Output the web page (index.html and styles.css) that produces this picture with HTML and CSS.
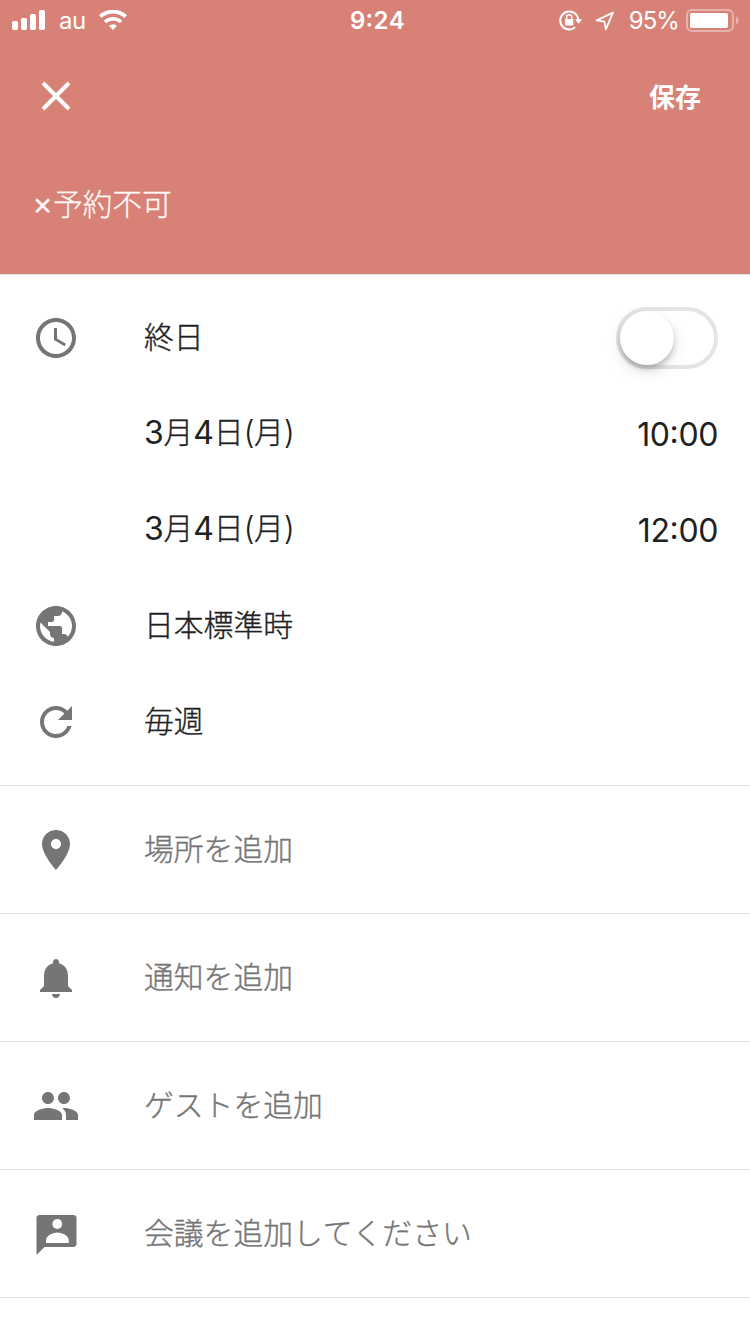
FILE: index.html
```html
<!DOCTYPE html>
<html lang="ja">
<head>
    <meta charset="UTF-8">
    <meta name="viewport" content="width=device-width, initial-scale=1.0">
    <title>予定の編集</title>
    <link rel="stylesheet" href="styles.css">
</head>
<body>
    <header class="header">
        <div class="status-bar">
            <div class="status-left">
                <svg class="signal" width="34" height="20" viewBox="0 0 34 20" fill="#fff">
                    <rect x="0" y="11" width="6" height="9" rx="1.7"/>
                    <rect x="9" y="8" width="6" height="12" rx="1.7"/>
                    <rect x="18" y="4" width="6" height="16" rx="1.7"/>
                    <rect x="27" y="0" width="6" height="20" rx="1.7"/>
                </svg>
                <span class="carrier">au</span>
                <svg class="wifi" width="28" height="20" viewBox="0 0 28 20">
                    <path d="M1.3 6.7a18.3 18.3 0 0 1 25.4 0" fill="none" stroke="#fff" stroke-width="3.8"/>
                    <path d="M6 12a11.6 11.6 0 0 1 16 0" fill="none" stroke="#fff" stroke-width="3.6"/>
                    <path d="M9.9 15.8a6 6 0 0 1 8.2 0L14 20z" fill="#fff"/>
                </svg>
            </div>
            <div class="clock">9:24</div>
            <div class="status-right">
                <svg class="lock" width="24" height="22" viewBox="0 0 24 22">
                    <path d="M19.3 10.2A9 9 0 1 0 16.2 17.3" fill="none" stroke="#fff" stroke-width="2"/>
                    <path d="M16 9.2h7.2l-3.6 4.6z" fill="#fff"/>
                    <rect x="6" y="9" width="8.4" height="6.4" rx="1" fill="#fff"/>
                    <path d="M7.6 9.5V7.4a2.6 2.6 0 0 1 5.2 0v2.1" fill="none" stroke="#fff" stroke-width="1.4"/>
                </svg>
                <svg class="location" width="20" height="20" viewBox="0 0 20 20">
                    <path d="M18 1.6L1.6 9.4l7.8 1.2 1.4 7.8z" fill="none" stroke="#fff" stroke-width="1.8" stroke-linejoin="round"/>
                </svg>
                <span class="percent">95%</span>
                <svg class="battery" width="54" height="24" viewBox="0 0 54 24">
                    <rect x="1" y="1" width="46" height="21" rx="5" fill="none" stroke="#fff" stroke-opacity=".4" stroke-width="2"/>
                    <rect x="4" y="4" width="38" height="15" rx="2" fill="#fff"/>
                    <path d="M50 7.5c3.6 1.6 3.6 6.4 0 8z" fill="#fff" fill-opacity=".4"/>
                </svg>
            </div>
        </div>
        <div class="toolbar">
            <svg width="48" height="48" viewBox="0 0 48 48">
                <path d="M11 11l26 26M37 11L11 37" stroke="#fff" stroke-width="4" fill="none"/>
            </svg>
            <div class="save">保存</div>
        </div>
        <div class="title"><span class="latin">×</span>予約不可</div>
    </header>

    <section class="times">
        <div class="row">
            <svg class="icon" viewBox="0 0 24 24"><path d="M11.99 2C6.47 2 2 6.48 2 12s4.47 10 9.99 10C17.52 22 22 17.52 22 12S17.52 2 11.99 2zM12 20c-4.42 0-8-3.58-8-8s3.58-8 8-8 8 3.58 8 8-3.58 8-8 8z"/><path d="M12.5 7H11v6l5.25 3.15.75-1.23-4.5-2.67z"/></svg>
            <div class="label">終日</div>
            <div class="switch"><div class="knob"></div></div>
        </div>
        <div class="row">
            <div class="icon"></div>
            <div class="label"><span class="latin">3</span>月<span class="latin">4</span>日<span class="latin paren">(</span>月<span class="latin paren">)</span></div>
            <div class="time">10:00</div>
        </div>
        <div class="row">
            <div class="icon"></div>
            <div class="label"><span class="latin">3</span>月<span class="latin">4</span>日<span class="latin paren">(</span>月<span class="latin paren">)</span></div>
            <div class="time">12:00</div>
        </div>
        <div class="row">
            <svg class="icon" viewBox="0 0 24 24"><path d="M12 2C6.48 2 2 6.48 2 12s4.48 10 10 10 10-4.48 10-10S17.52 2 12 2zm-1 17.93c-3.95-.49-7-3.85-7-7.93 0-.62.08-1.21.21-1.79L9 15v1c0 1.1.9 2 2 2v1.93zm6.9-2.54c-.26-.81-1-1.39-1.9-1.39h-1v-3c0-.55-.45-1-1-1H8v-2h2c.55 0 1-.45 1-1V7h2c1.1 0 2-.9 2-2v-.41c2.93 1.19 5 4.06 5 7.41 0 2.08-.8 3.97-2.1 5.39z"/></svg>
            <div class="label">日本標準時</div>
        </div>
        <div class="row">
            <svg class="icon" viewBox="0 0 24 24"><path d="M17.65 6.35C16.2 4.9 14.21 4 12 4c-4.42 0-7.99 3.58-7.99 8s3.57 8 7.99 8c3.73 0 6.84-2.55 7.73-6h-2.08c-.82 2.33-3.04 4-5.65 4-3.31 0-6-2.69-6-6s2.69-6 6-6c1.66 0 3.14.69 4.22 1.78L13 11h7V4l-2.35 2.35z"/></svg>
            <div class="label">毎週</div>
        </div>
    </section>

    <section class="row add">
        <svg class="icon" viewBox="0 0 24 24"><path d="M12 2C8.13 2 5 5.13 5 9c0 5.25 7 13 7 13s7-7.75 7-13c0-3.87-3.13-7-7-7zm0 9.5c-1.38 0-2.5-1.12-2.5-2.5s1.12-2.5 2.5-2.5 2.5 1.12 2.5 2.5-1.12 2.5-2.5 2.5z"/></svg>
        <div class="label">場所を追加</div>
    </section>
    <section class="row add">
        <svg class="icon" viewBox="0 0 24 24"><path d="M12 22c1.1 0 2-.9 2-2h-4c0 1.1.89 2 2 2zm6-6v-5c0-3.07-1.64-5.64-4.5-6.32V4c0-.83-.67-1.5-1.5-1.5s-1.5.67-1.5 1.5v.68C7.63 5.36 6 7.92 6 11v5l-2 2v1h16v-1l-2-2z"/></svg>
        <div class="label">通知を追加</div>
    </section>
    <section class="row add">
        <svg class="icon" viewBox="0 0 24 24"><path d="M16 11c1.66 0 2.99-1.34 2.99-3S17.66 5 16 5s-3 1.34-3 3 1.34 3 3 3zm-8 0c1.66 0 2.99-1.34 2.99-3S9.66 5 8 5 5 6.34 5 8s1.34 3 3 3zm0 2c-2.33 0-7 1.17-7 3.5V19h14v-2.5c0-2.33-4.67-3.5-7-3.5zm8 0c-.29 0-.62.02-.97.05 1.16.84 1.97 1.97 1.97 3.45V19h6v-2.5c0-2.33-4.67-3.5-7-3.5z"/></svg>
        <div class="label">ゲストを追加</div>
    </section>
    <section class="row add">
        <svg class="icon" viewBox="0 0 24 24">
            <path d="M20.8 2.5H3.7c-.8 0-1.45.65-1.45 1.45V22.5l4-4H20.8c.8 0 1.45-.65 1.45-1.45V3.95c0-.8-.65-1.45-1.45-1.45z"/>
            <circle cx="12.65" cy="7" r="2.45" fill="#fff"/>
            <path d="M7 16.5v-1.2c0-2.6 3.6-4 5.7-4s5.7 1.4 5.7 4v1.2z" fill="#fff"/>
        </svg>
        <div class="label">会議を追加してください</div>
    </section>
</body>
</html>
```
FILE: styles.css
```css
* {
    box-sizing: border-box;
}
body {
    margin: 0;
    background: #fff;
    color: #212121;
    font-family: "Noto Sans CJK JP", sans-serif;
    font-size: 29.8px;
    font-weight: 300;
    font-kerning: none;
    height: 1334px;
    overflow: hidden;
}
svg {
    display: block;
    flex: none;
}
.header {
    height: 274px;
    background: #d88176;
    color: #fff;
    box-shadow: 0 1px 1px rgba(0, 0, 0, 0.12);
}

/* status bar */
.status-bar {
    display: flex;
    align-items: center;
    height: 40px;
    padding: 0 10px 0 12px;
    font-family: Inter, sans-serif;
    font-size: 24px;
    font-weight: 400;
    line-height: 40px;
}
.status-left, .status-right {
    display: flex;
    align-items: center;
    flex: 1;
}
.status-right {
    justify-content: flex-end;
}
.carrier {
    margin: 2px 13px 0 13px;
    letter-spacing: -0.4px;
}
.clock {
    font-weight: 600;
    font-feature-settings: "case" 1;
    letter-spacing: 0.3px;
    padding: 1px 0 0 3px;
}
.lock {
    margin-top: 1px;
}
.location {
    margin: 1px 14px 0 12px;
}
.percent {
    padding-top: 2px;
    letter-spacing: -0.9px;
}
.battery {
    margin: 1px 0 0 7px;
}

.toolbar {
    display: flex;
    align-items: center;
    justify-content: space-between;
    height: 112px;
    padding: 0 49px 0 32px;
}
.save {
    padding-bottom: 2px;
    font-size: 26px;
    font-weight: 700;
}
.title {
    padding-left: 32px;
    line-height: 100px;
    letter-spacing: -0.1px;
    opacity: 0.95;
    -webkit-text-stroke: 0.3px;
}
.latin {
    font-family: Inter, sans-serif;
    font-size: 32px;
    font-weight: 400;
    letter-spacing: -0.3px;
    -webkit-text-stroke: 0;
}
.paren {
    font-weight: 300;
    letter-spacing: -0.6px;
}

/* rows */
.times {
    padding: 16px 0 15px;
}
.row {
    display: flex;
    align-items: center;
    height: 96px;
    padding: 0 32px;
}
.icon {
    width: 48px;
    height: 48px;
    margin-right: 64px;
    fill: #757575;
}
.label {
    flex: 1;
    padding-bottom: 6px;
    line-height: 48px;
    -webkit-text-stroke: 0.35px;
}
.label .latin {
    position: relative;
    top: 1px;
}
.time {
    font-family: Inter, sans-serif;
    font-size: 32px;
    font-weight: 400;
    font-feature-settings: "case" 1;
    letter-spacing: -0.4px;
}
.add {
    height: 128px;
    border-top: 1px solid #dfdfdf;
    color: #757575;
}
.add:last-child {
    height: 129px;
    border-bottom: 1px solid #dfdfdf;
}
.switch {
    width: 102px;
    height: 62px;
    border: 4px solid #e4e4e4;
    border-radius: 31px;
}
.knob {
    width: 54px;
    height: 54px;
    border-radius: 50%;
    background: #fff;
    box-shadow: 0 6px 16px rgba(0, 0, 0, 0.12), 0 4px 5px rgba(0, 0, 0, 0.18);
}
```
